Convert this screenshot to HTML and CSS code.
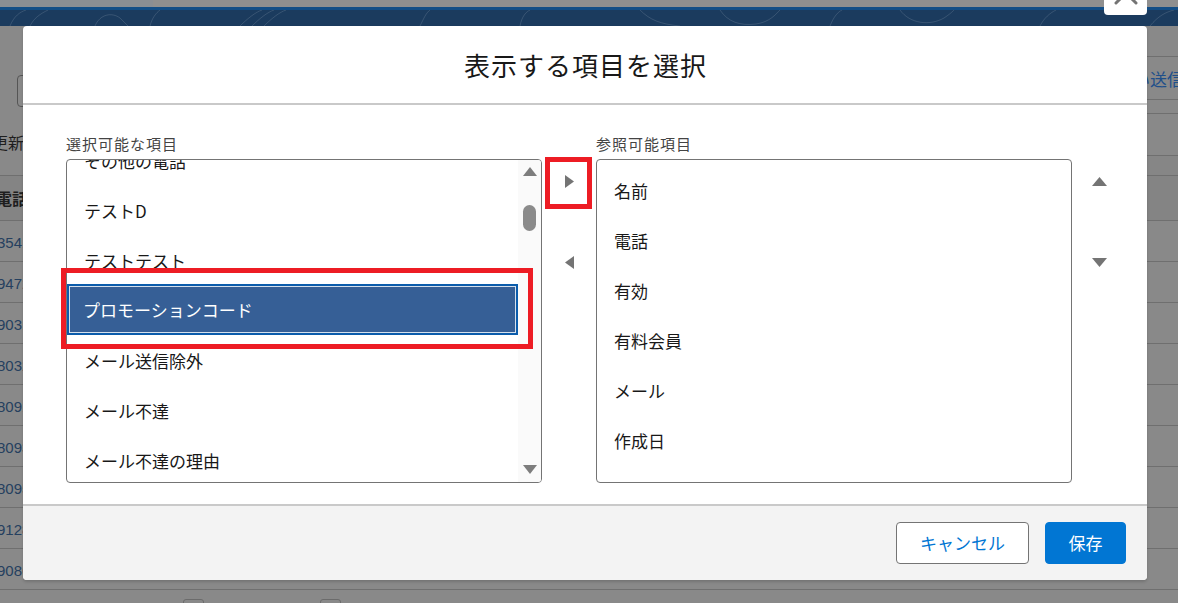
FILE: index.html
```html
<!DOCTYPE html>
<html lang="ja">
<head>
<meta charset="utf-8">
<title>表示する項目を選択</title>
<link rel="stylesheet" href="styles.css">
</head>
<body>
<div class="page">
  <div class="topstrip"></div>
  <div class="band">
    <svg class="band-art" width="1178" height="16" viewBox="0 0 1178 16">
      <g fill="none" stroke="rgba(255,255,255,0.13)" stroke-width="1">
        <path d="M10 16 C 14 6, 20 2, 26 0"/>
        <path d="M30 16 C 34 8, 40 4, 48 0"/>
        <path d="M95 16 C 100 4, 112 2, 120 8 C 124 12, 126 14, 128 16"/>
        <path d="M150 16 C 152 8, 156 3, 160 0"/>
        <path d="M240 16 C 248 8, 256 2, 262 0"/>
        <path d="M252 16 C 260 8, 268 2, 274 0"/>
        <path d="M264 16 C 272 8, 280 2, 286 0"/>
        <path d="M420 16 C 424 8, 426 3, 430 0"/>
        <path d="M520 16 C 522 6, 526 2, 530 0"/>
        <path d="M640 0 C 650 10, 660 14, 680 16"/>
        <path d="M720 0 C 728 12, 740 16, 756 14 C 770 12, 776 4, 780 0"/>
        <path d="M830 16 C 834 6, 838 2, 842 0"/>
        <path d="M900 0 C 910 14, 930 16, 944 8 C 950 4, 952 2, 954 0"/>
        <path d="M1040 16 C 1044 8, 1050 3, 1056 0"/>
        <path d="M1150 16 C 1158 6, 1166 2, 1174 0"/>
      </g>
    </svg>
  </div>

  <div class="head">
    <div class="head-left">
      <div class="hl-top"><div class="search"></div></div>
      <div class="hl-row hl-upd"><span class="bg-text">更新日</span></div>
      <div class="hl-row hl-tel"><span class="bg-text bold">電話</span></div>
    </div>
    <div class="head-mid"></div>
    <div class="head-right">
      <div class="hr-row hr-1"></div>
      <div class="hr-row hr-2"><span class="send">い送信</span></div>
      <div class="hr-row hr-3"></div>
      <div class="hr-row hr-4"></div>
      <div class="hr-row hr-5"></div>
      <div class="hr-row hr-6"></div>
    </div>
  </div>

  <div class="rows">
    <div class="row"><span class="num">3541</span></div>
    <div class="row"><span class="num">9472</span></div>
    <div class="row"><span class="num">9031</span></div>
    <div class="row"><span class="num">8032</span></div>
    <div class="row"><span class="num">8091</span></div>
    <div class="row"><span class="num">8093</span></div>
    <div class="row"><span class="num">8095</span></div>
    <div class="row"><span class="num">9128</span></div>
    <div class="row"><span class="num">9086</span></div>
  </div>
  <div class="checks"><span class="cb"></span><span class="cb"></span></div>
</div>

<button class="close" type="button" aria-label="閉じる">
  <svg width="24" height="24" viewBox="0 0 24 24"><path d="M2 2L22 22M22 2L2 22" stroke="#747474" stroke-width="3" stroke-linecap="round"/></svg>
</button>

<section class="modal">
  <header class="modal-head">
    <h2 class="modal-title">表示する項目を選択</h2>
  </header>
  <div class="modal-body">
    <div class="col-list">
      <div class="list-label">選択可能な項目</div>
      <div class="listbox">
        <div class="list-view">
          <ul class="items scrolled">
            <li class="item">その他の電話</li>
            <li class="item">テストD</li>
            <li class="item">テストテスト</li>
            <li class="item selected">プロモーションコード</li>
            <li class="item">メール送信除外</li>
            <li class="item">メール不達</li>
            <li class="item">メール不達の理由</li>
            <li class="item">メールアドレス</li>
          </ul>
        </div>
        <div class="scrollbar">
          <svg width="14" height="9" viewBox="0 0 14 9"><path d="M0 9L7 0L14 9Z" fill="#7d7d7d"/></svg>
          <div class="thumb"></div>
          <div class="spacer"></div>
          <svg width="14" height="9" viewBox="0 0 14 9"><path d="M0 0L14 0L7 9Z" fill="#7d7d7d"/></svg>
        </div>
      </div>
      <div class="mark mark-item"></div>
    </div>

    <div class="col-mid">
      <div class="mv-btn">
        <svg width="9" height="13" viewBox="0 0 9 13"><path d="M0 0L9 6.5L0 13Z" fill="#747474"/></svg>
        <div class="mark mark-btn"></div>
      </div>
      <div class="mv-btn mv-second">
        <svg width="9" height="13" viewBox="0 0 9 13"><path d="M9 0L0 6.5L9 13Z" fill="#747474"/></svg>
      </div>
    </div>

    <div class="col-list">
      <div class="list-label">参照可能項目</div>
      <div class="listbox">
        <div class="list-view">
          <ul class="items">
            <li class="item">名前</li>
            <li class="item">電話</li>
            <li class="item">有効</li>
            <li class="item">有料会員</li>
            <li class="item">メール</li>
            <li class="item">作成日</li>
          </ul>
        </div>
      </div>
    </div>

    <div class="col-mid">
      <div class="mv-btn">
        <svg width="15" height="9" viewBox="0 0 15 9"><path d="M0 9L7.5 0L15 9Z" fill="#747474"/></svg>
      </div>
      <div class="mv-btn mv-second">
        <svg width="15" height="9" viewBox="0 0 15 9"><path d="M0 0L15 0L7.5 9Z" fill="#747474"/></svg>
      </div>
    </div>
  </div>
  <footer class="modal-foot">
    <button class="btn btn-neutral" type="button">キャンセル</button>
    <button class="btn btn-brand" type="button">保存</button>
  </footer>
</section>
</body>
</html>
```

FILE: styles.css
```css
* { box-sizing: border-box; }

html, body {
  margin: 0;
  padding: 0;
}

body {
  width: 1178px;
  height: 603px;
  overflow: hidden;
  position: relative;
  background: #898989;
  font-family: "Noto Sans CJK JP", "Noto Sans", sans-serif;
  color: #181818;
}

/* ---------- dimmed page behind the modal ---------- */
.page {
  display: flex;
  flex-direction: column;
  height: 603px;
  overflow: hidden;
}

.page > * { flex-shrink: 0; }

.topstrip {
  height: 7px;
  background: linear-gradient(to right, #8a8e93 0, #8a8e93 153px, #8f8f8f 153px);
}

.band {
  height: 19px;
  border-top: 3px solid #134e86;
  background: #1b3b5e;
}

.band-art { display: block; }

.head {
  display: flex;
  height: 195px;
}

.head-left {
  width: 23px;
  overflow: hidden;
  display: flex;
  flex-direction: column;
}

.head-left > *, .head-right > * { flex-shrink: 0; }

.hl-top { height: 96px; padding-top: 49px; }

.search {
  margin-left: 17px;
  width: 30px;
  height: 32px;
  border: 1px solid #555;
  border-radius: 4px;
}

.hl-row {
  border-bottom: 1px solid #6f6f6f;
  white-space: nowrap;
}

.hl-upd { height: 54px; }
.hl-tel { height: 45px; background: #848484; }

.bg-text {
  display: block;
  margin-left: -8px;
  font-size: 16px;
  line-height: 40px;
  color: #1e1e1e;
}

.hl-tel .bg-text { margin-left: -4px; line-height: 44px; }
.bold { font-weight: 700; }

.head-mid { flex: 1; }

.head-right {
  width: 31px;
  overflow: hidden;
  display: flex;
  flex-direction: column;
}

.hr-row {
  border-bottom: 1px solid #6f6f6f;
  white-space: nowrap;
}

.hr-1 { height: 31px; }
.hr-2 { height: 43px; }
.hr-3 { height: 14px; }
.hr-4 { height: 42px; }
.hr-5 { height: 20px; background: #868686; }
.hr-6 { height: 45px; background: #848484; }

.send {
  display: block;
  margin-left: -14px;
  font-size: 17px;
  line-height: 44px;
  color: #1f4f8a;
}

.rows {
  display: flex;
  flex-direction: column;
}

.row {
  flex-shrink: 0;
  height: 41px;
  border-bottom: 1px solid #6f6f6f;
  overflow: hidden;
  white-space: nowrap;
}

.num {
  display: block;
  width: 23px;
  overflow: hidden;
  font-family: "Liberation Sans", Arial, sans-serif;
  font-size: 15px;
  line-height: 43px;
  color: #25405f;
  text-indent: -3px;
}

.checks {
  display: flex;
  gap: 116px;
  padding: 9px 0 0 183px;
}

.cb {
  width: 21px;
  height: 21px;
  border: 1px solid #6b6b6b;
  border-radius: 3px;
}

/* ---------- close button ---------- */
.close {
  position: absolute;
  left: 1104px;
  top: -17px;
  width: 43px;
  height: 32px;
  padding: 0;
  border: 0;
  border-radius: 4px;
  background: #fff;
  display: flex;
  align-items: center;
  justify-content: center;
}

.close svg { margin-top: -12px; }

/* ---------- modal ---------- */
.modal {
  position: absolute;
  left: 23px;
  top: 26px;
  width: 1124px;
  height: 554px;
  display: flex;
  flex-direction: column;
  border-radius: 4px;
  background: #fff;
  box-shadow: 0 2px 3px rgba(0, 0, 0, 0.16);
}

.modal-head {
  height: 79px;
  border-bottom: 2px solid #c9c9c9;
  border-radius: 4px 4px 0 0;
  display: flex;
  align-items: center;
  justify-content: center;
}

.modal-title {
  margin: 0;
  font-size: 26px;
  font-weight: 400;
  letter-spacing: 1px;
  line-height: 34px;
  padding-left: 1px;
  color: #181818;
}

.modal-body {
  flex: 1;
  display: flex;
  padding: 29px 21px 21px 43px;
}

.col-list {
  width: 476px;
  position: relative;
}

.list-label {
  height: 20px;
  margin-bottom: 5px;
  font-size: 15px;
  letter-spacing: 1px;
  line-height: 20px;
  color: #444;
  white-space: nowrap;
}

.listbox {
  height: 324px;
  border: 1px solid #747474;
  border-radius: 4px;
  display: flex;
  overflow: hidden;
}

.list-view {
  flex: 1;
  overflow: hidden;
}

.items {
  list-style: none;
  margin: 0;
  padding: 6px 0 0;
}

.items.scrolled { margin-top: -30px; }

.item {
  height: 50px;
  padding-left: 17px;
  font-size: 17px;
  line-height: 50px;
  white-space: nowrap;
  color: #181818;
}

.item.selected {
  margin-top: -2px;
  height: 51px;
  margin-bottom: 1px;
  padding-left: 14px;
  line-height: 47px;
  background: #365f96;
  color: #fff;
  border: 2px solid #0b5cab;
  box-shadow: inset 0 0 0 1px #d6e0ec;
}

.scrollbar {
  width: 23px;
  background: #fafafa;
  display: flex;
  flex-direction: column;
  align-items: flex-start;
  padding: 7px 0 8px 5px;
}

.thumb {
  width: 13px;
  height: 26px;
  margin-top: 29px;
  border-radius: 7px;
  background: #8b8b8b;
}

.spacer { flex: 1; }

.mark {
  position: absolute;
  border: 5px solid #ed1c24;
  pointer-events: none;
}

.mark-item {
  left: -5px;
  top: 134px;
  width: 472px;
  height: 81px;
}

.col-mid {
  width: 54px;
  padding-top: 25px;
  display: flex;
  flex-direction: column;
}

.mv-btn {
  position: relative;
  height: 44px;
  display: flex;
  align-items: center;
  justify-content: center;
}

.mv-second { margin-top: 37px; }

.mark-btn {
  left: 3px;
  top: -2px;
  width: 47px;
  height: 52px;
}

.modal-foot {
  height: 76px;
  border-top: 2px solid #c9c9c9;
  border-radius: 0 0 4px 4px;
  background: #f3f3f3;
  display: flex;
  justify-content: flex-end;
  align-items: center;
  gap: 16px;
  padding-right: 21px;
}

.btn {
  height: 42px;
  border-radius: 4px;
  font-family: "Noto Sans CJK JP", "Noto Sans", sans-serif;
  font-size: 17px;
  line-height: 40px;
  padding: 0;
}

.btn-neutral {
  width: 133px;
  border: 1px solid #747474;
  background: #fff;
  color: #0176d3;
}

.btn-brand {
  width: 81px;
  border: 1px solid #0176d3;
  background: #0176d3;
  color: #fff;
}
```
